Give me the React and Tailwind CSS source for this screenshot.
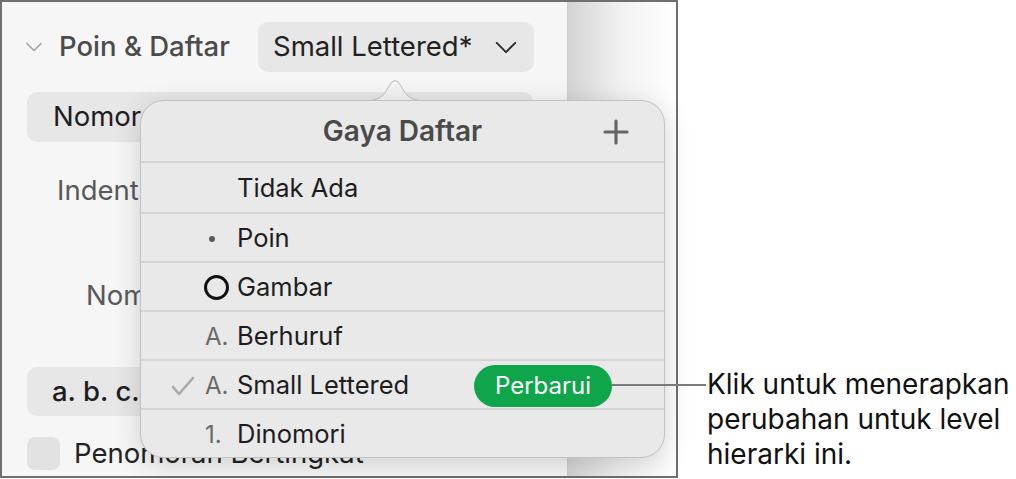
import React from "react";

const font = { fontFamily: "Inter, 'Noto Sans', sans-serif" };

const styles = [
  { id: "none", label: "Tidak Ada", marker: null },
  { id: "bullet", label: "Poin", marker: "dot" },
  { id: "image", label: "Gambar", marker: "ring" },
  { id: "lettered", label: "Berhuruf", marker: "A." },
  { id: "small", label: "Small Lettered", marker: "A.", checked: true, update: true },
  { id: "numbered", label: "Dinomori", marker: "1." },
];

function Chevron({ className, strokeWidth = 2 }) {
  return (
    <svg viewBox="0 0 24 14" className={className} fill="none" stroke="currentColor" strokeWidth={strokeWidth} strokeLinecap="round" strokeLinejoin="round">
      <path d="M2 2l10 10L22 2" />
    </svg>
  );
}

function Marker({ type }) {
  if (type === "dot") return <span className="block w-[6px] h-[6px] rounded-full bg-[#5a5a5a] ml-[4px]" />;
  if (type === "ring") return <span className="block w-[25px] h-[25px] rounded-full border-[3.5px] border-[#111] -ml-[1px]" />;
  if (type) return <span className="text-[#6a6a6a] text-[24px]">{type}</span>;
  return null;
}

function StyleRow({ item, first }) {
  return (
    <div className={`flex items-center border-t-2 border-[#d5d5d5] pt-[2px] ${first ? "h-[51px]" : "h-[49px]"}`}>
      <div className="w-[58px] flex justify-end pr-[4px]">
        {item.checked && (
          <svg viewBox="0 0 24 20" className="w-[24px] h-[20px]" fill="none" stroke="#a9a9a9" strokeWidth="2.6" strokeLinecap="round" strokeLinejoin="round">
            <path d="M2 11l6 7L22 2" />
          </svg>
        )}
      </div>
      <div className="w-[38px] pl-[6px] flex items-center">
        <Marker type={item.marker} />
      </div>
      <span className="text-[#1d1d1d]">{item.label}</span>
      {item.update && (
        <button className="ml-auto mr-[52px] h-[42px] w-[138px] rounded-full bg-[#0fa54b] text-white text-[24px]">
          Perbarui
        </button>
      )}
    </div>
  );
}

export default function App() {
  return (
    <div className="relative flex w-[1016px] h-[479px] bg-white text-[27.5px] overflow-hidden" style={font}>
      {/* inspector frame */}
      <div className="flex w-[678px] h-[478px] border-2 border-[#6f6f6f] shrink-0">
        <div className="w-[566px] bg-[#f6f6f6] border-r border-[#cfcfcf] flex flex-col">
          <div className="flex items-center h-[50px] mt-[20px] pl-[23px]">
            <Chevron className="w-[18px] h-[10px] text-[#a0a0a0]" />
            <span className="ml-[16px] font-medium text-[#4b4b4b]">Poin &amp; Daftar</span>
            <div className="ml-auto mr-[33px] w-[276px] h-[50px] rounded-[10px] bg-[#e7e7e7] flex items-center pl-[15px] text-[#222]">
              <span>Small Lettered*</span>
              <Chevron className="ml-auto mr-[15px] w-[26px] h-[13px] text-[#2a2a2a]" strokeWidth={2} />
            </div>
          </div>
          <div className="mx-[25px] mt-[20px] h-[50px] rounded-[10px] bg-[#e7e7e7] flex items-center pl-[26px] w-[506px] text-[#1e1e1e]">
            Nomor
          </div>
          <div className="mt-[33px] pl-[55px] text-[#595959] leading-[30px]">Indentasi</div>
          <div className="mt-[75px] pl-[84px] text-[#595959] leading-[30px]">Nomor</div>
          <div className="mx-[25px] mt-[57px] h-[49px] rounded-[10px] bg-[#e7e7e7] flex items-center pl-[25px] w-[300px] font-medium text-[#1e1e1e]">
            a. b. c.
          </div>
          <div className="flex items-center mt-[17px] pl-[25px]">
            <span className="w-[33px] h-[33px] rounded-[8px] bg-[#e2e2e2]" />
            <span className="ml-[14px] text-[#222]">Penomoran Bertingkat</span>
          </div>
        </div>
        <div className="flex-1 bg-gradient-to-r from-[#d4d4d4] via-[#f2f2f2] to-white" />
      </div>

      {/* callout */}
      <div className="ml-[29px] pt-[367px] leading-[35px] text-[28px] text-[#111]">
        <p>Klik untuk menerapkan</p>
        <p>perubahan untuk level</p>
        <p>hierarki ini.</p>
      </div>

      {/* list style popover */}
      <svg className="absolute left-[363px] top-[77px]" width="64" height="25" viewBox="0 0 64 25">
        <path d="M0 24 C14 24 20 21 26 9 Q32 -2 38 9 C44 21 50 24 64 24" fill="#f3f3f3" stroke="#bcbcbc" strokeWidth="1" />
      </svg>
      <div className="absolute left-[140px] top-[100px] w-[525px] h-[358px] rounded-[24px] bg-[#e9e9e9] border border-[#c2c2c2] shadow-[0_6px_28px_rgba(0,0,0,0.16)] overflow-hidden text-[25.5px]">
        <div className="relative flex items-center justify-center h-[60px]">
          <span className="font-semibold text-[28px] text-[#4a4a4a]">Gaya Daftar</span>
          <svg viewBox="0 0 26 26" className="absolute right-[35px] top-[18px] w-[26px] h-[26px]" stroke="#666" strokeWidth="3.2" strokeLinecap="round">
            <path d="M13 2v22M2 13h22" />
          </svg>
        </div>
        {styles.map((item, i) => (
          <StyleRow key={item.id} item={item} first={i === 0} />
        ))}
      </div>
      <div className="absolute left-[612px] top-[384px] w-[94px] h-[2px] bg-[#7b7b7b]" />
    </div>
  );
}
